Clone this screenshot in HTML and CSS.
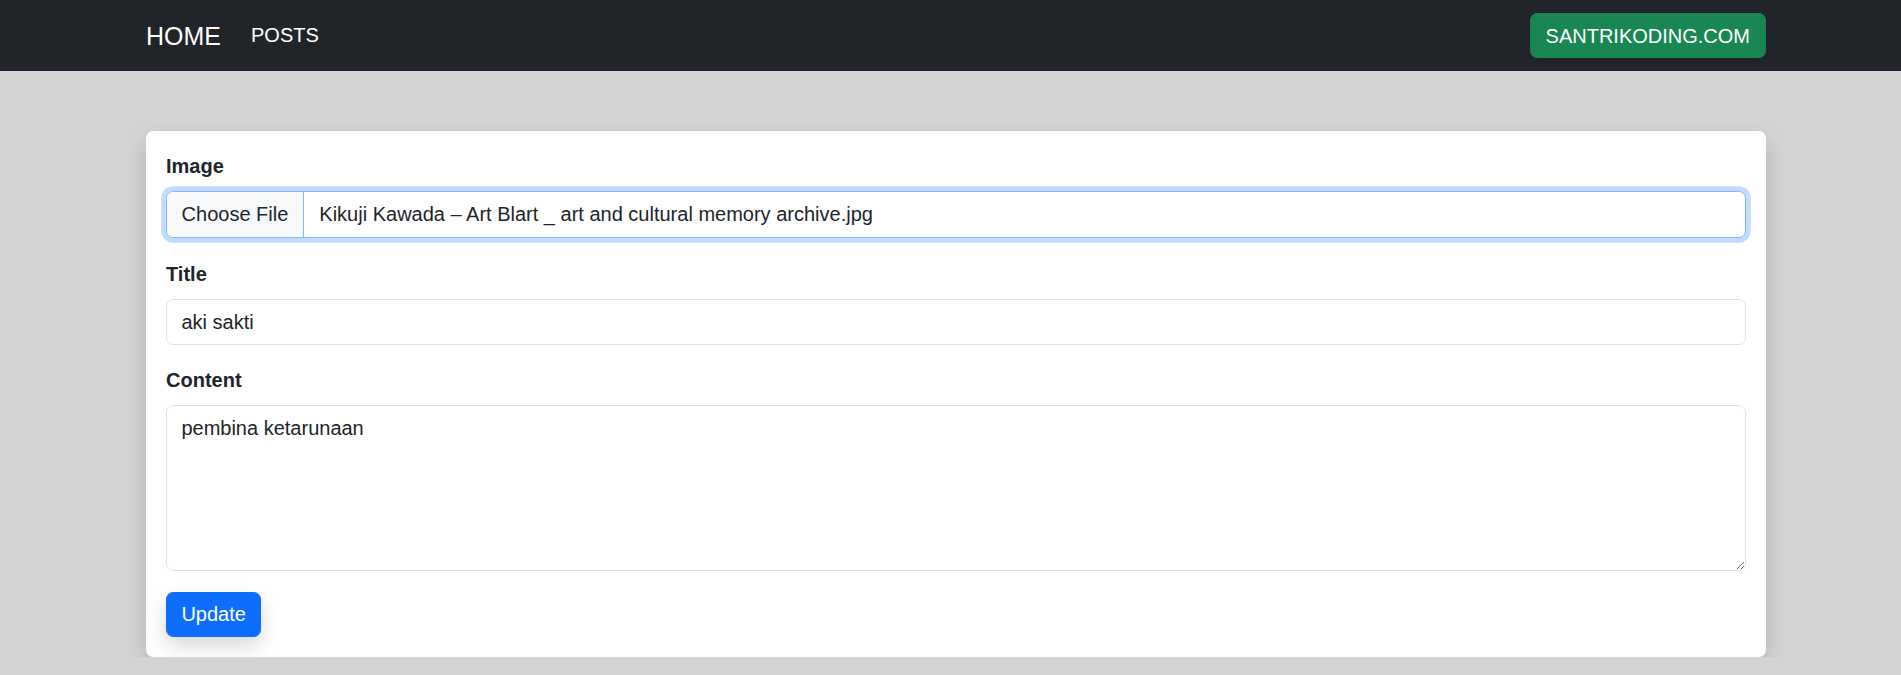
FILE: index.html
```html
<!DOCTYPE html>
<html lang="id">
<head>
<meta charset="utf-8">
<title>Edit Post</title>
<link rel="stylesheet" href="styles.css">
</head>
<body>
<nav class="navbar">
  <div class="container nav-inner">
    <div class="nav-left">
      <a class="brand" href="#">HOME</a>
      <a class="nav-link" href="#">POSTS</a>
    </div>
    <a class="btn btn-success" href="#">SANTRIKODING.COM</a>
  </div>
</nav>
<main class="container main">
  <div class="card">
    <form class="card-body">
      <div class="group">
        <label class="label">Image</label>
        <div class="file-control">
          <span class="file-btn">Choose File</span>
          <span class="file-name">Kikuji Kawada – Art Blart _ art and cultural memory archive.jpg</span>
        </div>
      </div>
      <div class="group group-title">
        <label class="label" for="title">Title</label>
        <input class="form-control" id="title" type="text" value="aki sakti">
      </div>
      <div class="group">
        <label class="label" for="content">Content</label>
        <textarea class="form-control textarea" id="content">pembina ketarunaan</textarea>
      </div>
      <button class="btn btn-primary" type="button">Update</button>
    </form>
  </div>
</main>
</body>
</html>
```
FILE: styles.css
```css
* { box-sizing: border-box; }
body {
  margin: 0;
  background: #d3d3d3;
  font-family: "Liberation Sans", Arial, sans-serif;
  font-size: 20px;
  line-height: 1.5;
  color: #212529;
}
.container {
  width: 1620px;
  margin-left: 146px;
}
.navbar {
  background: #212529;
  height: 71px;
  display: flex;
  align-items: center;
}
.nav-inner {
  display: flex;
  align-items: center;
  justify-content: space-between;
}
.nav-left {
  display: flex;
  align-items: center;
}
.brand {
  color: #fff;
  text-decoration: none;
  font-size: 25px;
  line-height: 36px;
  padding: 6px 0;
  margin-right: 20px;
}
.nav-link {
  color: #fff;
  text-decoration: none;
  font-size: 20px;
  line-height: 30px;
  padding: 9px 12px 11px 10px;
}
.btn {
  display: inline-block;
  font-family: inherit;
  font-size: 20px;
  line-height: 30px;
  border: 1.2px solid transparent;
  border-radius: 7.2px;
  color: #fff;
  text-decoration: none;
  cursor: pointer;
}
.btn-success {
  background: #198754;
  border-color: #198754;
  padding: 6.8px 15px;
}
.btn-primary {
  background: #0d6efd;
  border-color: #0d6efd;
  padding: 6.3px 14.4px;
  box-shadow: 0 9.6px 19.2px rgba(0, 0, 0, 0.15);
}
.main {
  margin-top: 60px;
}
.card {
  background: #fff;
  border-radius: 7.2px;
  box-shadow: 0 9.6px 19.2px rgba(0, 0, 0, 0.15);
}
.card-body {
  display: flex;
  flex-direction: column;
  align-items: flex-start;
  padding: 20px 20px 20px;
}
.group {
  width: 100%;
  margin-bottom: 21px;
  display: flex;
  flex-direction: column;
}
.group-title {
  margin-bottom: 20px;
}
.label {
  font-weight: bold;
  line-height: 30px;
  margin-bottom: 10px;
}
.form-control {
  display: block;
  width: 100%;
  height: 46px;
  font-family: inherit;
  font-size: 20px;
  line-height: 30px;
  color: #212529;
  padding: 6.8px 14.4px;
  background: #fff;
  border: 1.2px solid #dee2e6;
  border-radius: 7.2px;
  outline: none;
  margin: 0;
}
.textarea {
  height: 166px;
  resize: vertical;
}
.file-control {
  display: flex;
  align-items: stretch;
  width: 100%;
  height: 47px;
  border: 1.2px solid #86b7fe;
  border-radius: 7.2px;
  box-shadow: 0 0 0 4.8px rgba(13, 110, 253, 0.25);
  overflow: hidden;
  background: #fff;
}
.file-btn {
  background: #f8f9fa;
  border-right: 1.2px solid #86b7fe;
  padding: 7.2px 15px 7.2px 14.6px;
  line-height: 30px;
  white-space: nowrap;
}
.file-name {
  padding: 7.2px 14px 7.2px 15px;
  line-height: 30px;
  white-space: nowrap;
}
```
